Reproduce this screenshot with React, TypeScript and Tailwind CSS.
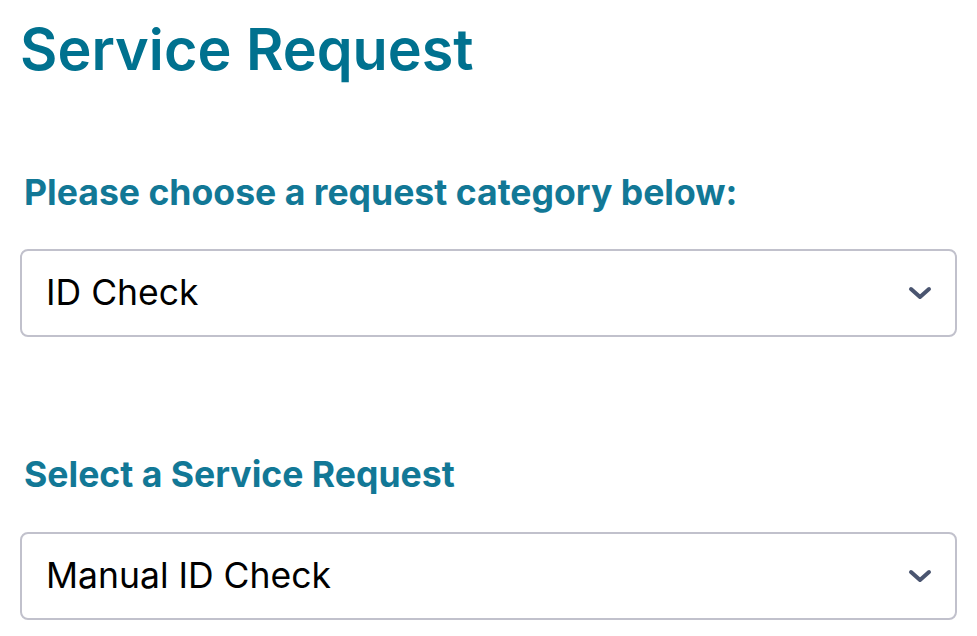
const font = { fontFamily: "Inter, 'Noto Sans', sans-serif" };

function Chevron() {
  return (
    <svg width="24" height="14" viewBox="0 0 24 14" fill="none" className="shrink-0">
      <path d="M3 3l9 8 9-8" stroke="#4a5570" strokeWidth="4" strokeLinecap="round" strokeLinejoin="round" />
    </svg>
  );
}

function Select({ value }: { value: string }) {
  return (
    <div className="flex h-[88px] items-center justify-between rounded-lg border-2 border-[#c1c1cc] bg-white pl-6 pr-[23px]">
      <span className="text-[35.5px] text-black">{value}</span>
      <Chevron />
    </div>
  );
}

export default function App() {
  return (
    <main className="min-h-[636px] bg-white px-5" style={font}>
      <h1 className="pt-[13px] text-[57.5px] font-semibold leading-[72px] text-[#00718f]">Service Request</h1>

      <label className="mt-[88px] block pl-1 text-[35.6px] font-bold leading-[40px] text-[#127896]">
        Please choose a request category below:
      </label>
      <div className="mt-[36px]">
        <Select value="ID Check" />
      </div>

      <label className="mt-[118px] block pl-1 text-[35.6px] font-bold leading-[40px] text-[#127896]">
        Select a Service Request
      </label>
      <div className="mt-[37px]">
        <Select value="Manual ID Check" />
      </div>
    </main>
  );
}
